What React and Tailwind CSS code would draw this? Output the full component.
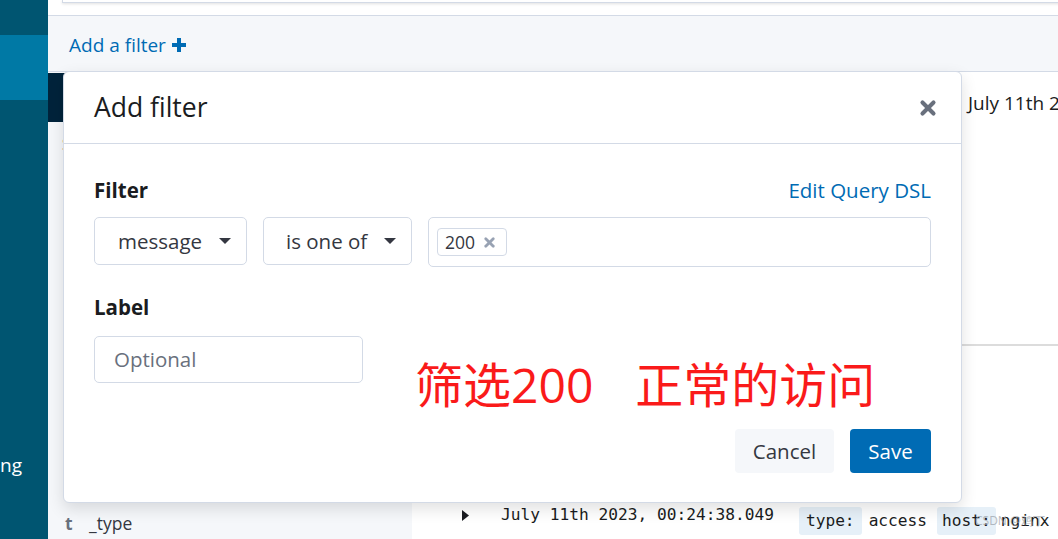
import React from "react";
import { X } from "lucide-react";

const sans = { fontFamily: '"Open Sans", "Noto Sans", sans-serif' };

const Caret = () => (
  <svg width="12" height="6" viewBox="0 0 12 6" className="shrink-0">
    <path d="M0 0 L12 0 L6 6 Z" fill="#343741" />
  </svg>
);

const Sidebar = () => (
  <div className="w-[48px] shrink-0 bg-[#005571] flex flex-col">
    <div className="h-[35px]" />
    <div className="h-[65px] bg-[#0079a5]" />
    <div className="h-[350px]" />
    <div className="flex justify-end overflow-hidden whitespace-nowrap pr-[26px] text-white text-[19px] leading-[30px]">
      Monitoring
    </div>
  </div>
);

const FilterModal = () => (
  <div className="absolute left-[15px] top-[71px] w-[899px] h-[432px] bg-white border border-[#d3dae6] rounded-[6px] shadow-[0_6px_16px_rgba(0,0,0,0.12)] flex flex-col">
    <div className="h-[72px] shrink-0 flex items-center justify-between pl-[30px] pr-[22px] border-b border-[#d3dae6]">
      <span className="text-[26.5px] text-[#1a1c21]">Add filter</span>
      <X size={22} strokeWidth={4.5} color="#69707d" />
    </div>
    <div className="relative flex-1 flex flex-col px-[30px] pt-[31px] pb-[29px]">
      <div className="flex items-center justify-between h-[30px]">
        <span className="text-[20.5px] font-bold text-[#1a1c21]">Filter</span>
        <span className="text-[20.5px] text-[#006bb4]">Edit Query DSL</span>
      </div>
      <div className="flex items-start gap-[16px] mt-[12px]">
        <div className="w-[153px] h-[48px] flex items-center justify-between pl-[23px] pr-[15px] border border-[#d3dae6] rounded-[5px] text-[20.5px] text-[#343741]">
          <span>message</span>
          <Caret />
        </div>
        <div className="w-[149px] h-[48px] flex items-center justify-between pl-[22px] pr-[15px] border border-[#d3dae6] rounded-[5px] text-[20.5px] text-[#343741]">
          <span>is one of</span>
          <Caret />
        </div>
        <div className="flex-1 h-[50px] flex items-center pl-[8px] border border-[#d3dae6] rounded-[5px]">
          <div className="h-[28px] w-[70px] flex items-center gap-[7px] pl-[7px] border border-[#d3dae6] rounded-[4px] text-[17.5px] text-[#343741]">
            <span>200</span>
            <X size={15} strokeWidth={4.5} color="#98a2b3" />
          </div>
        </div>
      </div>
      <div className="h-[30px] mt-[25px] flex items-center">
        <span className="text-[20.5px] font-bold text-[#1a1c21]">Label</span>
      </div>
      <div className="w-[269px] h-[47px] mt-[14px] flex items-center pl-[19px] border border-[#d3dae6] rounded-[5px] text-[20.5px] text-[#69707d]">
        Optional
      </div>
      <div className="flex-1" />
      <div className="flex justify-end gap-[16px]">
        <div className="w-[99px] h-[44px] flex items-center justify-center bg-[#f5f7fa] rounded-[4px] text-[20.5px] text-[#343741]">
          Cancel
        </div>
        <div className="w-[81px] h-[44px] flex items-center justify-center bg-[#006bb4] rounded-[4px] text-[20.5px] text-white">
          Save
        </div>
      </div>
      <div
        className="absolute left-[351px] top-[217px] text-[48px] leading-none text-[#fa1a1a] whitespace-nowrap"
        style={{ fontFamily: '"Open Sans", "Noto Sans CJK SC", sans-serif' }}
      >
        筛选200<span className="ml-[42px]">正常的访问</span>
      </div>
    </div>
  </div>
);

export default function App() {
  return (
    <div className="w-[1058px] h-[539px] overflow-hidden flex bg-white" style={sans}>
      <Sidebar />
      <div className="relative flex-1 flex flex-col">
        <div className="h-[16px] shrink-0 bg-white border-b border-[#d3dae6] pl-[14px]">
          <div className="h-[3px] bg-white border-l border-b border-[#d3dae6] shadow-[0_1px_3px_rgba(0,0,0,0.12)]" />
        </div>
        <div className="h-[55px] shrink-0 bg-[#f5f7fa] flex items-center pl-[21px] pt-[3px] text-[19px] text-[#006bb4]">
          <span>Add a filter</span>
          <svg width="14" height="14" viewBox="0 0 14 14" className="ml-[6px]">
            <path d="M5 0 H9 V5 H14 V9 H9 V14 H5 V9 H0 V5 H5 Z" fill="#006bb4" />
          </svg>
        </div>
        <div className="flex-1 flex border-t border-[#d3dae6] bg-[#f5f7fa]">
          <div className="w-[364px] shrink-0 flex flex-col">
            <div className="h-[49px] mt-[1px] bg-[#00233b] text-white text-[18px] pl-[15px] flex items-center">a</div>
            <div className="pl-[14px] pt-[10px] text-[#bd4f2b] text-[16px]">S</div>
            <div className="flex-1" />
            <div className="flex items-center h-[30px] mb-[1px] pl-[17px] text-[17.5px] text-[#343741]">
              <span className="font-bold text-[#69707d] w-[24px]">t</span>
              <span>_type</span>
            </div>
          </div>
          <div className="flex-1 flex flex-col bg-white">
            <div className="h-[274px] border-b-2 border-[#dcdcdc] pl-[556px] pt-[17px] text-[19px] text-[#1a1c21] whitespace-nowrap overflow-hidden">
              July 11th 2023, 00:24:38.049
            </div>
            <div className="flex-1" />
            <div className="h-[38px] flex items-center pl-[50px] text-[16.2px] text-[#1a1c21] whitespace-nowrap" style={{ fontFamily: '"DejaVu Sans Mono", monospace' }}>
              <svg width="7" height="11" viewBox="0 0 7 11" className="mt-[-10px]">
                <path d="M0 0 L7 5.5 L0 11 Z" fill="#1a1c21" />
              </svg>
              <span className="ml-[32px] mt-[-10px]">July 11th 2023, 00:24:38.049</span>
              <span className="ml-[25px] px-[7px] h-[28px] flex items-center bg-[#e6f0f8] rounded-[3px] mt-[2px]">type:</span>
              <span className="ml-[7px] mt-[2px]">access</span>
              <span className="ml-[10px] px-[5px] h-[28px] flex items-center bg-[#e6f0f8] rounded-[3px] mt-[2px]">host:</span>
              <span className="ml-[5px] mt-[2px]">nginx</span>
            </div>
          </div>
        </div>
        <FilterModal />
        <div className="absolute left-[927px] top-[512px] text-[12px] text-[#9aa0a8] opacity-70">CSDN @鸡丁</div>
      </div>
    </div>
  );
}
